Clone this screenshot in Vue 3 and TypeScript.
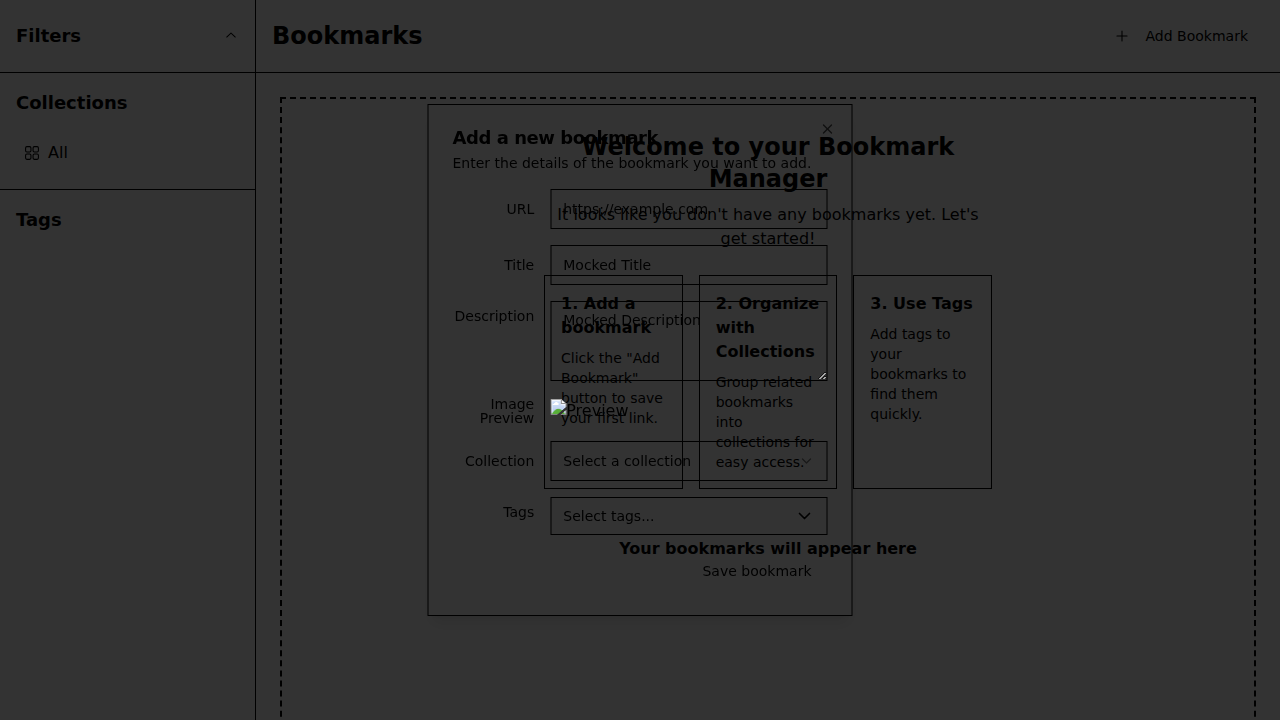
<script setup lang="ts">
import { ref } from 'vue'

interface Step {
  title: string
  text: string
}

const steps: Step[] = [
  { title: '1. Add a bookmark', text: 'Click the "Add Bookmark" button to save your first link.' },
  { title: '2. Organize with Collections', text: 'Group related bookmarks into collections for easy access.' },
  { title: '3. Use Tags', text: 'Add tags to your bookmarks to find them quickly.' },
]

const url = ref('')
const title = ref('Mocked Title')
const description = ref('Mocked Description')
const previewUrl = ref('about:blank')
</script>

<template>
  <div class="app">
    <aside class="sidebar">
      <div class="side-head">
        <h2>Filters</h2>
        <svg class="icon" viewBox="0 0 15 15" fill="none">
          <path fill="currentColor" fill-rule="evenodd" clip-rule="evenodd" d="M3.13523 8.84197C3.3241 9.04343 3.64052 9.05363 3.84197 8.86477L7.5 5.43536L11.158 8.86477C11.3595 9.05363 11.6759 9.04343 11.8648 8.84197C12.0536 8.64051 12.0434 8.32409 11.842 8.13523L7.84197 4.38523C7.64964 4.20492 7.35036 4.20492 7.15803 4.38523L3.15803 8.13523C2.95657 8.32409 2.94637 8.64051 3.13523 8.84197Z" />
        </svg>
      </div>
      <section class="side-section">
        <h2>Collections</h2>
        <a class="side-item">
          <svg class="icon" viewBox="0 0 15 15" fill="none" stroke="currentColor">
            <rect x="1.5" y="1.5" width="5" height="5" rx="1.2" />
            <rect x="8.5" y="1.5" width="5" height="5" rx="1.2" />
            <rect x="1.5" y="8.5" width="5" height="5" rx="1.2" />
            <rect x="8.5" y="8.5" width="5" height="5" rx="1.2" />
          </svg>
          <span>All</span>
        </a>
      </section>
      <section class="side-section last">
        <h2>Tags</h2>
      </section>
    </aside>

    <div class="content">
      <header class="topbar">
        <h1>Bookmarks</h1>
        <button class="btn add">
          <svg class="icon" viewBox="0 0 15 15" fill="none">
            <path fill="currentColor" fill-rule="evenodd" clip-rule="evenodd" d="M8 2.75C8 2.47386 7.77614 2.25 7.5 2.25C7.22386 2.25 7 2.47386 7 2.75V7H2.75C2.47386 7 2.25 7.22386 2.25 7.5C2.25 7.77614 2.47386 8 2.75 8H7V12.25C7 12.5261 7.22386 12.75 7.5 12.75C7.77614 12.75 8 12.5261 8 12.25V8H12.25C12.5261 8 12.75 7.77614 12.75 7.5C12.75 7.22386 12.5261 7 12.25 7H8V2.75Z" />
          </svg>
          Add Bookmark
        </button>
      </header>
      <main class="main">
        <div class="empty">
          <div class="welcome">
            <h2>Welcome to your Bookmark Manager</h2>
            <p>It looks like you don't have any bookmarks yet. Let's get started!</p>
            <div class="steps">
              <div v-for="step in steps" :key="step.title" class="step">
                <h3>{{ step.title }}</h3>
                <p>{{ step.text }}</p>
              </div>
            </div>
            <h3 class="soon">Your bookmarks will appear here</h3>
          </div>
        </div>
      </main>
    </div>
  </div>

  <div class="overlay"></div>

  <div class="dialog" role="dialog">
    <div class="dialog-head">
      <h2>Add a new bookmark</h2>
      <p>Enter the details of the bookmark you want to add.</p>
    </div>
    <form class="form" @submit.prevent>
      <div class="row">
        <label for="url">URL</label>
        <input id="url" v-model="url" class="field" placeholder="https://example.com" />
      </div>
      <div class="row">
        <label for="title">Title</label>
        <input id="title" v-model="title" class="field" />
      </div>
      <div class="row top">
        <label for="description">Description</label>
        <textarea id="description" v-model="description" class="field area" spellcheck="false"></textarea>
      </div>
      <div class="row">
        <label>Image Preview</label>
        <div class="preview"><img :src="previewUrl" alt="Preview" /></div>
      </div>
      <div class="row">
        <label>Collection</label>
        <div class="field select">
          <span>Select a collection</span>
          <svg class="icon faded" viewBox="0 0 24 24" fill="none" stroke="currentColor" stroke-width="2" stroke-linecap="round" stroke-linejoin="round">
            <path d="m6 9 6 6 6-6" />
          </svg>
        </div>
      </div>
      <div class="row top">
        <label>Tags</label>
        <div class="field select tags">
          <span>Select tags...</span>
          <svg class="caret" viewBox="0 0 24 24" fill="none" stroke="currentColor" stroke-width="2" stroke-linecap="round" stroke-linejoin="round">
            <path d="m6 9 6 6 6-6" />
          </svg>
        </div>
      </div>
      <div class="dialog-foot">
        <button class="btn" type="submit">Save bookmark</button>
      </div>
    </form>
    <button class="close" aria-label="Close">
      <svg class="icon" viewBox="0 0 24 24" fill="none" stroke="currentColor" stroke-width="2" stroke-linecap="round" stroke-linejoin="round">
        <path d="M18 6 6 18" />
        <path d="m6 6 12 12" />
      </svg>
    </button>
  </div>
</template>

<style>
body {
  background: #fff;
  overflow: hidden;
}
</style>

<style scoped>
.app,
.dialog {
  font-family: "DejaVu Sans", sans-serif;
  font-size: 16px;
  line-height: 24px;
  color: #000;
}
.app *,
.dialog,
.dialog * {
  box-sizing: border-box;
}
h1, h2, h3, p {
  margin: 0;
}
.app {
  display: flex;
  height: 100vh;
  overflow: hidden;
}
.icon {
  width: 16px;
  height: 16px;
  flex-shrink: 0;
  display: block;
}
.sidebar {
  width: 256px;
  flex-shrink: 0;
  border-right: 1px solid #000;
}
.sidebar h2 {
  font-size: 18px;
  line-height: 28px;
  font-weight: 600;
}
.side-head,
.topbar {
  display: flex;
  align-items: center;
  justify-content: space-between;
  height: 73px;
  padding: 0 16px;
  border-bottom: 1px solid #000;
}
.side-section {
  padding: 16px;
  border-bottom: 1px solid #000;
}
.side-section.last {
  border-bottom: 0;
}
.side-item {
  display: flex;
  align-items: center;
  gap: 8px;
  height: 40px;
  margin-top: 16px;
  padding: 0 8px;
}
.content {
  flex: 1;
  min-width: 0;
}
.topbar h1 {
  font-size: 24px;
  line-height: 32px;
  font-weight: 700;
}
.btn {
  display: inline-flex;
  align-items: center;
  height: 40px;
  padding: 0 16px;
  border: 0;
  background: transparent;
  color: inherit;
  font: 500 14px/20px "DejaVu Sans", sans-serif;
}
.add {
  gap: 16px;
}
.main {
  padding: 24px;
}
.empty {
  display: flex;
  justify-content: center;
  align-items: flex-start;
  min-height: 680px;
  padding: 32px;
  border: 2px dashed #000;
}
.welcome {
  width: 448px;
  text-align: center;
}
.welcome h2 {
  font-size: 24px;
  line-height: 32px;
  font-weight: 700;
  margin-bottom: 8px;
}
.steps {
  display: grid;
  grid-template-columns: repeat(3, minmax(0, 1fr));
  gap: 16px;
  margin-top: 24px;
  text-align: left;
}
.step {
  padding: 16px;
  border: 1px solid #000;
}
.welcome h3 {
  font-size: 16px;
  line-height: 24px;
  font-weight: 600;
}
.step p {
  margin-top: 8px;
  font-size: 14px;
  line-height: 20px;
}
.soon {
  margin-top: 48px;
}
.overlay {
  position: fixed;
  inset: 0;
  z-index: 50;
  background: rgba(0, 0, 0, 0.8);
}
.dialog {
  position: fixed;
  left: 50%;
  top: 50%;
  z-index: 50;
  display: grid;
  gap: 16px;
  width: 100%;
  max-width: 425px;
  padding: 24px;
  border: 1px solid #000;
  transform: translate(-50%, -50%);
  box-shadow: 0 10px 15px -3px rgba(0, 0, 0, 0.1), 0 4px 6px -4px rgba(0, 0, 0, 0.1);
}
.dialog-head h2 {
  font-size: 18px;
  line-height: 18px;
  font-weight: 600;
  letter-spacing: -0.45px;
}
.dialog-head p {
  margin-top: 6px;
  font-size: 14px;
  line-height: 20px;
}
.form {
  display: grid;
  gap: 16px;
}
.row {
  display: grid;
  grid-template-columns: repeat(4, minmax(0, 1fr));
  align-items: center;
  gap: 16px;
}
.row.top {
  align-items: start;
}
.row label {
  font-size: 14px;
  line-height: 14px;
  font-weight: 500;
  text-align: right;
}
.row.top label {
  margin-top: 8px;
}
.field {
  grid-column: span 3;
  width: 100%;
  height: 40px;
  margin: 0;
  padding: 8px 12px;
  border: 1px solid #000;
  border-radius: 0;
  background: transparent;
  color: #000;
  font: 14px/20px "DejaVu Sans", sans-serif;
  outline: none;
}
.field::placeholder {
  color: #000;
  opacity: 1;
}
.area {
  display: block;
  height: 80px;
  resize: vertical;
}
.preview {
  grid-column: span 3;
  height: 24px;
}
.preview img {
  display: block;
  max-width: 100%;
}
.select {
  display: flex;
  align-items: center;
  justify-content: space-between;
}
.faded {
  opacity: 0.5;
}
.tags {
  height: 38px;
}
.caret {
  width: 20px;
  height: 20px;
  display: block;
}
.dialog-foot {
  display: flex;
  justify-content: flex-end;
}
.close {
  position: absolute;
  right: 16px;
  top: 16px;
  padding: 0;
  border: 0;
  background: transparent;
  color: #000;
  opacity: 0.7;
}
</style>
